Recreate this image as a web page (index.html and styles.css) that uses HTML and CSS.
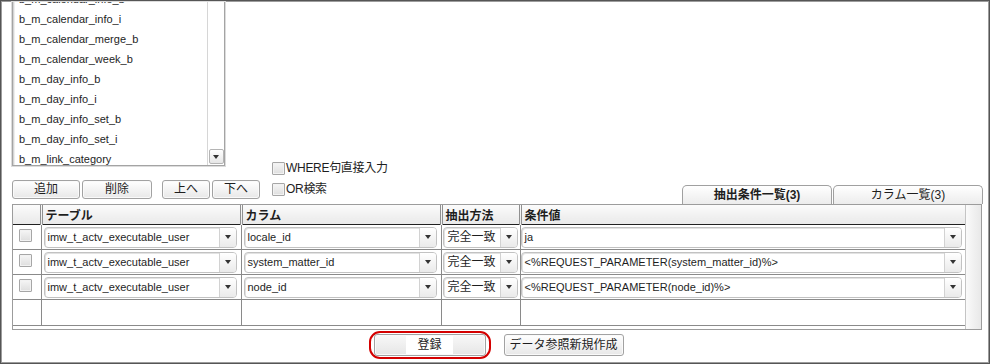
FILE: index.html
```html
<!DOCTYPE html>
<html lang="ja">
<head>
    <meta charset="UTF-8" />
    <meta name="viewport" content="width=device-width, initial-scale=1.0"/>
    <title>データ参照 - 抽出条件</title>
    <link rel="stylesheet" href="styles.css">
</head>
<body>

    <div class="frame">

        <div class="head">
            <div class="left-col">
                <!-- テーブル一覧 -->
                <div class="listbox">
                    <ul class="list-items">
                        <li>b_m_calendar_info_b</li>
                        <li>b_m_calendar_info_i</li>
                        <li>b_m_calendar_merge_b</li>
                        <li>b_m_calendar_week_b</li>
                        <li>b_m_day_info_b</li>
                        <li>b_m_day_info_i</li>
                        <li>b_m_day_info_set_b</li>
                        <li>b_m_day_info_set_i</li>
                        <li>b_m_link_category</li>
                    </ul>
                    <div class="vscroll">
                        <span class="scroll-down"><i class="tri"></i></span>
                    </div>
                </div>

                <div class="toolbar">
                    <div class="btn-group">
                        <button class="btn btn-add">追加</button>
                        <button class="btn btn-del">削除</button>
                    </div>
                    <div class="btn-group">
                        <button class="btn btn-move">上へ</button>
                        <button class="btn btn-move">下へ</button>
                    </div>
                </div>
            </div>

            <div class="options">
                <label class="check-label"><span class="checkbox"></span>WHERE句直接入力</label>
                <label class="check-label"><span class="checkbox"></span>OR検索</label>
            </div>

            <div class="tabs">
                <div class="tab active">抽出条件一覧(3)</div>
                <div class="tab">カラム一覧(3)</div>
            </div>
        </div>

        <!-- 抽出条件一覧 -->
        <div class="grid">
            <table class="grid-table">
                <colgroup>
                    <col class="c-check">
                    <col class="c-table">
                    <col class="c-column">
                    <col class="c-method">
                    <col>
                </colgroup>
                <thead>
                    <tr>
                        <th class="th-check"></th>
                        <th>テーブル</th>
                        <th>カラム</th>
                        <th>抽出方法</th>
                        <th>条件値</th>
                    </tr>
                </thead>
                <tbody>
                    <tr>
                        <td class="td-check"><span class="checkbox"></span></td>
                        <td class="td-table"><div class="combo"><span class="combo-text">imw_t_actv_executable_user</span><span class="combo-btn"><i class="tri"></i></span></div></td>
                        <td class="td-table"><div class="combo"><span class="combo-text">locale_id</span><span class="combo-btn"><i class="tri"></i></span></div></td>
                        <td class="td-method"><div class="combo"><span class="combo-text jp">完全一致</span><span class="combo-btn"><i class="tri"></i></span></div></td>
                        <td class="td-value"><div class="combo"><span class="combo-text">ja</span><span class="combo-btn"><i class="tri"></i></span></div></td>
                    </tr>
                    <tr>
                        <td class="td-check"><span class="checkbox"></span></td>
                        <td class="td-table"><div class="combo"><span class="combo-text">imw_t_actv_executable_user</span><span class="combo-btn"><i class="tri"></i></span></div></td>
                        <td class="td-table"><div class="combo"><span class="combo-text">system_matter_id</span><span class="combo-btn"><i class="tri"></i></span></div></td>
                        <td class="td-method"><div class="combo"><span class="combo-text jp">完全一致</span><span class="combo-btn"><i class="tri"></i></span></div></td>
                        <td class="td-value"><div class="combo"><span class="combo-text">&lt;%REQUEST_PARAMETER(system_matter_id)%&gt;</span><span class="combo-btn"><i class="tri"></i></span></div></td>
                    </tr>
                    <tr>
                        <td class="td-check"><span class="checkbox"></span></td>
                        <td class="td-table"><div class="combo"><span class="combo-text">imw_t_actv_executable_user</span><span class="combo-btn"><i class="tri"></i></span></div></td>
                        <td class="td-table"><div class="combo"><span class="combo-text">node_id</span><span class="combo-btn"><i class="tri"></i></span></div></td>
                        <td class="td-method"><div class="combo"><span class="combo-text jp">完全一致</span><span class="combo-btn"><i class="tri"></i></span></div></td>
                        <td class="td-value"><div class="combo"><span class="combo-text">&lt;%REQUEST_PARAMETER(node_id)%&gt;</span><span class="combo-btn"><i class="tri"></i></span></div></td>
                    </tr>
                    <tr class="row-empty">
                        <td></td><td></td><td></td><td></td><td></td>
                    </tr>
                </tbody>
            </table>
            <div class="grid-scroll"></div>
        </div>

        <div class="actions">
            <div class="highlight">
                <button class="btn btn-submit"><span>登録</span></button>
            </div>
            <button class="btn btn-new">データ参照新規作成</button>
        </div>

    </div>

</body>
</html>
```

FILE: styles.css
```css
body {
    margin: 0;
    font-family: "Liberation Sans", "Noto Sans CJK JP", sans-serif;
    font-size: 12px;
    color: #1e1e1e;
    background: #fff;
}

.frame {
    width: 990px;
    height: 364px;
    box-sizing: border-box;
    border: 1px solid #555;
    box-shadow: inset 0 0 0 1px #9c9c9c;
    padding: 1px 7px 0 11px;
    overflow: hidden;
}

/* ---- 上部 ---- */

.head {
    display: flex;
    height: 202px;
}

.left-col {
    display: flex;
    flex-direction: column;
    width: 248px;
}

.listbox {
    display: flex;
    width: 213px;
    height: 164px;
    box-sizing: border-box;
    border: 1px solid #a4a4a4;
    border-top: none;
    box-shadow: 0 0 0 1px #dcdcdc, inset 1px 0 0 #d4d4d4, inset 2px 0 0 #eeeeee;
    background: #fff;
}

.list-items {
    flex: 1;
    list-style: none;
    margin: 0;
    padding: 0;
    overflow: hidden;
}

.list-items li {
    height: 20px;
    line-height: 20px;
    padding-left: 6px;
    font-size: 11px;
    white-space: nowrap;
}

.list-items li:first-child {
    margin-top: -13px;
}

.vscroll {
    width: 16px;
    border-left: 1px solid #d6d6d6;
    display: flex;
    flex-direction: column;
    justify-content: flex-end;
    align-items: center;
}

.scroll-down {
    width: 13px;
    height: 13px;
    margin-bottom: 1px;
    border: 1px solid #b4b4b4;
    border-radius: 2px;
    background: linear-gradient(#ffffff, #e6e6e6);
    display: flex;
    align-items: center;
    justify-content: center;
}

.tri {
    display: block;
    width: 0;
    height: 0;
    border-left: 3px solid transparent;
    border-right: 3px solid transparent;
    border-top: 4px solid #333;
}

.toolbar {
    display: flex;
    gap: 10px;
    margin-top: 14px;
}

.btn-group {
    display: flex;
    gap: 2px;
}

.btn {
    height: 19px;
    padding: 0;
    box-sizing: border-box;
    border: 1px solid #a2a2a2;
    border-radius: 3px;
    background: linear-gradient(#ffffff, #e8e8e8);
    box-shadow: inset 0 0 0 1px #fafafa;
    font-family: "Liberation Sans", "Noto Sans CJK JP", sans-serif;
    font-size: 12px;
    line-height: 17px;
    color: #1e1e1e;
    cursor: pointer;
    overflow: hidden;
}

.btn-add {
    width: 68px;
}

.btn-del {
    width: 70px;
}

.btn-move {
    width: 48px;
}

.options {
    align-self: flex-end;
    display: flex;
    flex-direction: column;
    gap: 8px;
    margin-left: 12px;
    padding-bottom: 8px;
}

.check-label {
    display: flex;
    align-items: center;
    height: 13px;
    line-height: 13px;
    font-size: 12px;
    letter-spacing: -0.3px;
}

.checkbox {
    display: inline-block;
    width: 11px;
    height: 11px;
    border: 1px solid #a6a6a6;
    border-radius: 1px;
    background: linear-gradient(#f6f6f6, #dedede);
    box-shadow: inset 0 0 0 1px #f2f2f2;
}

.check-label .checkbox {
    margin-right: 1px;
}

.tabs {
    align-self: flex-end;
    display: flex;
    gap: 1px;
    margin-left: auto;
    margin-right: -1px;
}

.tab {
    width: 150px;
    height: 19px;
    box-sizing: border-box;
    border: 1px solid #a0a0a0;
    border-bottom: none;
    border-radius: 5px 5px 0 0;
    background: linear-gradient(#ffffff, #ececec);
    text-align: center;
    line-height: 18px;
    font-size: 12px;
}

.tab.active {
    font-weight: bold;
}

/* ---- 一覧 ---- */

.grid {
    display: flex;
    height: 126px;
    box-sizing: border-box;
    border: 1px solid #9c9c9c;
}

.grid-table {
    width: 952px;
    border-collapse: collapse;
    table-layout: fixed;
    align-self: flex-start;
}

.c-check {
    width: 28px;
}

.c-table, .c-column {
    width: 200px;
}

.c-method {
    width: 79px;
}

.grid-table th {
    height: 19px;
    padding: 0 0 0 3px;
    text-align: left;
    font-size: 12px;
    font-weight: bold;
    background: linear-gradient(#fbfbfb, #e9e9e9);
    border-bottom: 1px solid #202020;
    border-left: 3px double #909090;
    white-space: nowrap;
}

.grid-table th.th-check {
    border-left: none;
}

.grid-table td {
    height: 24px;
    padding: 0;
    border-right: 1px solid #8a8a8a;
    border-bottom: 1px solid #8a8a8a;
    vertical-align: middle;
}

.grid-table td:last-child {
    border-right: none;
}

.grid-table .row-empty td {
    height: 25px;
}

.td-check {
    padding-left: 6px !important;
}

.td-table {
    padding: 0 4px 0 2px !important;
}

.td-method {
    padding: 0 2px 0 1px !important;
}

.td-value {
    padding: 0 3px 0 0 !important;
}

.combo {
    display: flex;
    height: 21px;
    box-sizing: border-box;
    border: 1px solid #c2c2c2;
    border-radius: 4px;
    background: #fff;
    box-shadow: inset 1px 1px 0 #e2e2e2;
}

.combo-text {
    flex: 1;
    padding-left: 3px;
    font-size: 11px;
    line-height: 19px;
    white-space: nowrap;
    overflow: hidden;
}

.combo-text.jp {
    font-size: 12px;
    padding-left: 4px;
}

.combo-btn {
    width: 16px;
    border-left: 1px solid #d2d2d2;
    border-radius: 0 3px 3px 0;
    background: linear-gradient(#ffffff, #eaeaea);
    display: flex;
    align-items: center;
    justify-content: center;
}

.grid-scroll {
    flex: 1;
    border-left: 1px solid #c4c4c4;
    background: linear-gradient(to right, #fafafa, #e8e8e8);
}

/* ---- 下部ボタン ---- */

.actions {
    display: flex;
    justify-content: center;
    align-items: center;
    gap: 13px;
    margin-top: 1px;
    padding-right: 2px;
}

.highlight {
    padding: 1px 3px;
    border: 2px solid #d40000;
    border-radius: 11px;
}

.btn-submit {
    width: 112px;
    height: 22px;
    background: linear-gradient(#f8f8f8, #e6e6e6);
}

.btn-submit span {
    display: inline-block;
    padding: 0 11px;
    line-height: 18px;
    background: #fff;
}

.btn-new {
    width: 120px;
    height: 22px;
    line-height: 19px;
}
```
